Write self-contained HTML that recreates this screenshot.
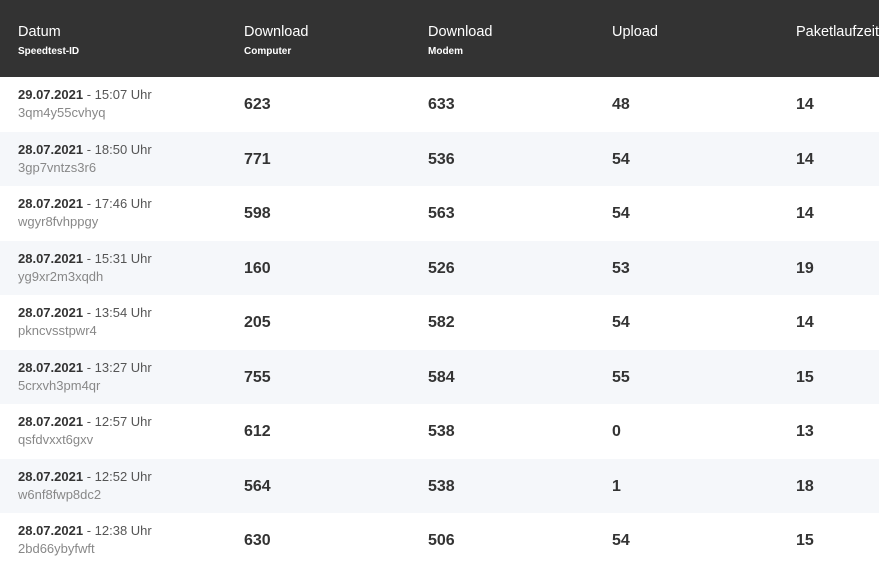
<!DOCTYPE html>
<html><head><meta charset="utf-8"><style>
body{margin:0;width:879px;height:562px;overflow:hidden;font-family:"Liberation Sans","DejaVu Sans",sans-serif;background:#fff}
.h{height:77px;background:#333;color:#fff;position:relative}
.h div{position:absolute;top:23px;font-size:14.5px;line-height:18px}
.h small{display:block;font-size:10px;margin-top:5px;font-weight:bold;line-height:12px}
.r{height:54.5px;position:relative;color:#333}
.r:nth-child(even){background:#f5f7fa}
.r div{position:absolute}
.d{left:18px;top:9px;font-size:13px;line-height:18px}
.d b{color:#333}.d span{color:#555}.d i{font-style:normal;color:#888;display:block}
.n{top:18px;font-size:16px;font-weight:bold;color:#333;line-height:20px}
</style></head><body>
<div class="h">
<div style="left:18px">Datum<small>Speedtest-ID</small></div>
<div style="left:244px">Download<small>Computer</small></div>
<div style="left:428px">Download<small>Modem</small></div>
<div style="left:612px">Upload</div>
<div style="left:796px">Paketlaufzeit</div>
</div>
<div>
<div class="r"><div class="d"><b>29.07.2021</b> <span>- 15:07 Uhr</span><i>3qm4y55cvhyq</i></div><div class="n" style="left:244px">623</div><div class="n" style="left:428px">633</div><div class="n" style="left:612px">48</div><div class="n" style="left:796px">14</div></div>
<div class="r"><div class="d"><b>28.07.2021</b> <span>- 18:50 Uhr</span><i>3gp7vntzs3r6</i></div><div class="n" style="left:244px">771</div><div class="n" style="left:428px">536</div><div class="n" style="left:612px">54</div><div class="n" style="left:796px">14</div></div>
<div class="r"><div class="d"><b>28.07.2021</b> <span>- 17:46 Uhr</span><i>wgyr8fvhppgy</i></div><div class="n" style="left:244px">598</div><div class="n" style="left:428px">563</div><div class="n" style="left:612px">54</div><div class="n" style="left:796px">14</div></div>
<div class="r"><div class="d"><b>28.07.2021</b> <span>- 15:31 Uhr</span><i>yg9xr2m3xqdh</i></div><div class="n" style="left:244px">160</div><div class="n" style="left:428px">526</div><div class="n" style="left:612px">53</div><div class="n" style="left:796px">19</div></div>
<div class="r"><div class="d"><b>28.07.2021</b> <span>- 13:54 Uhr</span><i>pkncvsstpwr4</i></div><div class="n" style="left:244px">205</div><div class="n" style="left:428px">582</div><div class="n" style="left:612px">54</div><div class="n" style="left:796px">14</div></div>
<div class="r"><div class="d"><b>28.07.2021</b> <span>- 13:27 Uhr</span><i>5crxvh3pm4qr</i></div><div class="n" style="left:244px">755</div><div class="n" style="left:428px">584</div><div class="n" style="left:612px">55</div><div class="n" style="left:796px">15</div></div>
<div class="r"><div class="d"><b>28.07.2021</b> <span>- 12:57 Uhr</span><i>qsfdvxxt6gxv</i></div><div class="n" style="left:244px">612</div><div class="n" style="left:428px">538</div><div class="n" style="left:612px">0</div><div class="n" style="left:796px">13</div></div>
<div class="r"><div class="d"><b>28.07.2021</b> <span>- 12:52 Uhr</span><i>w6nf8fwp8dc2</i></div><div class="n" style="left:244px">564</div><div class="n" style="left:428px">538</div><div class="n" style="left:612px">1</div><div class="n" style="left:796px">18</div></div>
<div class="r"><div class="d"><b>28.07.2021</b> <span>- 12:38 Uhr</span><i>2bd66ybyfwft</i></div><div class="n" style="left:244px">630</div><div class="n" style="left:428px">506</div><div class="n" style="left:612px">54</div><div class="n" style="left:796px">15</div></div>
</div>
</body></html>
